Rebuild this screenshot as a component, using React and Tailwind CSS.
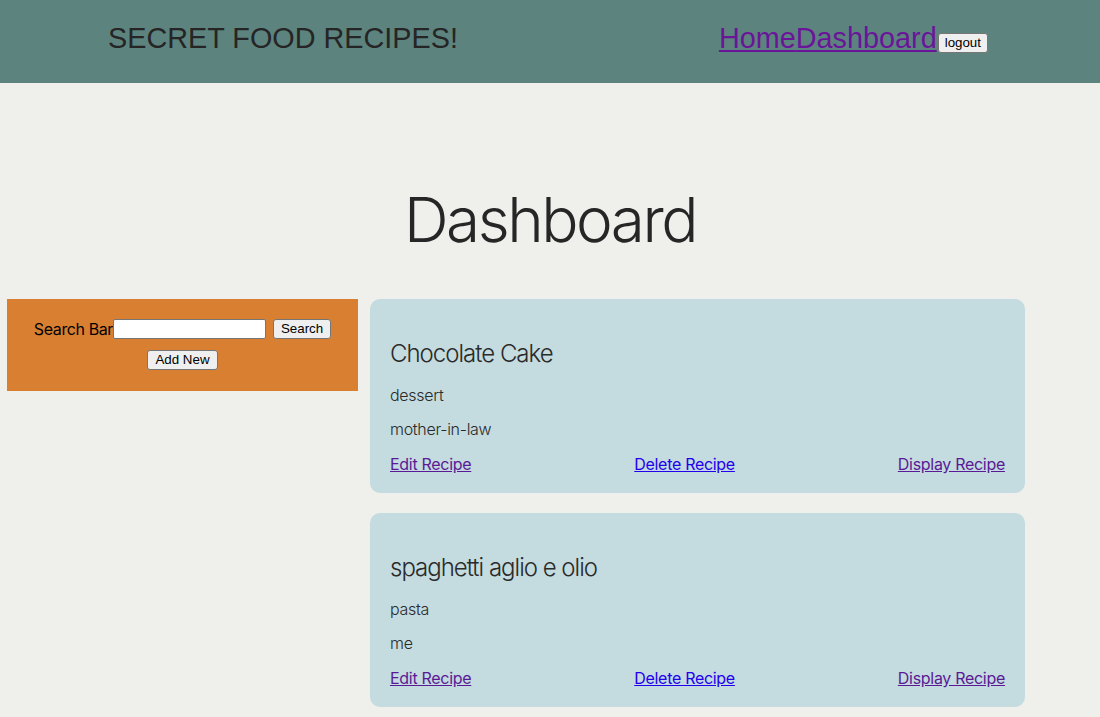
import React from 'react';

const recipes = [
  { id: 1, title: 'Chocolate Cake', category: 'dessert', source: 'mother-in-law' },
  { id: 2, title: 'spaghetti aglio e olio', category: 'pasta', source: 'me' },
];

function RecipeCard({ recipe }) {
  return (
    <div className="bg-[#c4dbdf] rounded-[10px] px-5 pt-[39px] pb-[17px] text-[#2a2a2a] font-light tracking-[-0.3px]">
      <h3 className="text-[24px] leading-[32px] font-light tracking-[-1px]">{recipe.title}</h3>
      <p className="mt-[13px] text-[16px] leading-[24px]">{recipe.category}</p>
      <p className="mt-[10px] text-[16px] leading-[24px]">{recipe.source}</p>
      <div className="mt-[11px] flex justify-between text-[16px] leading-[24px] font-normal">
        <a href="#edit" className="underline text-[#5a1a96]">Edit Recipe</a>
        <a href="#delete" className="underline text-[#2200ee]">Delete Recipe</a>
        <a href="#display" className="underline text-[#5a1a96]">Display Recipe</a>
      </div>
    </div>
  );
}

export default function App() {
  return (
    <div className="min-h-[717px] bg-[#efefeb] font-['Inter',sans-serif]">
      {/* Header */}
      <header className="h-[83px] bg-[#5d837e] flex items-start pt-[22px] pl-[108px] pr-[112px] font-['Liberation_Sans',Arial,sans-serif]">
        <h1 className="text-[28.8px] leading-[33px] text-[#252525]">SECRET FOOD RECIPES!</h1>
        <nav className="ml-auto flex items-start">
          <a href="#home" className="text-[28.8px] leading-[33px] underline text-[#6a1599]">Home</a>
          <a href="#dashboard" className="text-[28.8px] leading-[33px] underline text-[#6a1599]">Dashboard</a>
          <button className="mt-[11px] ml-[1px] h-[20px] text-[13.33px] leading-[16px] px-[6px] bg-[#efefef] border border-[#767676] rounded-[3px] text-black">
            logout
          </button>
        </nav>
      </header>

      {/* Title */}
      <h2 className="mt-[106px] text-center text-[62px] leading-[62px] font-light tracking-[-2.5px] text-[#262626]">Dashboard</h2>

      {/* Content */}
      <div className="mt-[48px] flex items-start pl-[7px] gap-[12px] pb-4">
        <div className="w-[351px] bg-[#d97f31] pt-5 pb-[21px] flex flex-col items-center gap-[11px]">
          <div className="h-[20px] flex items-center">
            <span className="text-[16px] tracking-[-0.4px] text-black">Search Bar</span>
            <input
              type="text"
              className="w-[153px] h-[20px] bg-white border border-[#767676] rounded-[2px] px-1 text-[13px] outline-none"
            />
            <button className="ml-[7px] h-[20px] px-[7px] text-[13.33px] leading-[16px] font-['Liberation_Sans',Arial,sans-serif] bg-[#efefef] border border-[#767676] rounded-[3px] text-black">
              Search
            </button>
          </div>
          <div className="h-[20px] flex items-center">
            <button className="h-[20px] px-[7px] text-[13.33px] leading-[16px] font-['Liberation_Sans',Arial,sans-serif] bg-[#efefef] border border-[#767676] rounded-[3px] text-black">
              Add New
            </button>
          </div>
        </div>

        <div className="w-[655px] flex flex-col gap-5">
          {recipes.map(r => (
            <RecipeCard key={r.id} recipe={r} />
          ))}
        </div>
      </div>
    </div>
  );
}
